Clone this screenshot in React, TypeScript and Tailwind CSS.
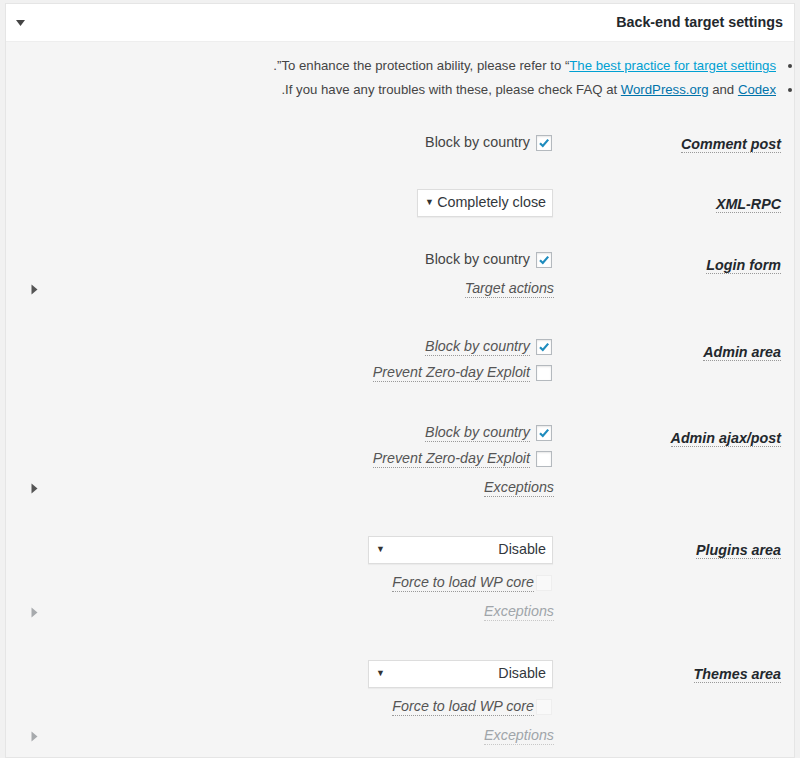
import React from 'react';

const font = { fontFamily: '"Liberation Sans", Arial, sans-serif' };

const Checkbox: React.FC<{ checked?: boolean; disabled?: boolean }> = ({ checked, disabled }) => (
  <span
    className={`inline-flex h-[16px] w-[16px] shrink-0 items-center justify-center border ${
      disabled ? 'border-[#eeeeee] bg-[#f9f9f9]' : 'border-[#b4b9be] bg-white shadow-[inset_0_1px_2px_rgba(0,0,0,0.1)]'
    }`}
  >
    {checked && (
      <svg width="12" height="12" viewBox="0 0 12 12">
        <path d="M2 6.2 L4.8 9 L10.2 2.6" fill="none" stroke="#1e8cbe" strokeWidth="2.2" />
      </svg>
    )}
  </span>
);

const Hint: React.FC<{ children: React.ReactNode; muted?: boolean }> = ({ children, muted }) => (
  <span
    className={`italic text-[14.3px] leading-[17px] border-b border-dotted ${
      muted ? 'text-[#a0a5aa] border-[#c8c8c8]' : 'text-[#555] border-[#999]'
    }`}
  >
    {children}
  </span>
);

const Toggle: React.FC<{ muted?: boolean }> = ({ muted }) => (
  <svg width="7" height="11" viewBox="0 0 7 11" className="shrink-0">
    <path d="M0.5 0.5 L6.5 5.5 L0.5 10.5 Z" fill={muted ? '#a7aaad' : '#555'} />
  </svg>
);

const Select: React.FC<{ value: string; width: string }> = ({ value, width }) => (
  <div
    className={`flex h-[28px] ${width} items-center justify-between border border-[#dddddd] bg-white pr-[6px] pl-[7px] text-[14.3px] text-[#32373c] shadow-[0_1px_1px_rgba(0,0,0,0.04)]`}
  >
    <span>{value}</span>
    <span className="text-[9px] text-[#333]">▼</span>
  </div>
);

const Label: React.FC<{ children: React.ReactNode; pt?: string }> = ({ children, pt = 'pt-[20px]' }) => (
  <div className={`w-[240px] shrink-0 pr-[13px] ${pt}`}>
    <span className="border-b border-dotted border-[#999] text-[14.3px] font-bold italic leading-[17px] text-[#23282d]">
      {children}
    </span>
  </div>
);

const CheckLine: React.FC<{ text: string; checked?: boolean; italic?: boolean; className?: string }> = ({
  text,
  checked,
  italic,
  className = '',
}) => (
  <div className={`flex h-[20px] items-center gap-[6px] pr-[2px] ${className}`}>
    <Checkbox checked={checked} />
    {italic ? <Hint>{text}</Hint> : <span className="text-[14.3px] text-[#444]">{text}</span>}
  </div>
);

const ForceLine: React.FC<{ className?: string }> = ({ className = '' }) => (
  <div className={`flex h-[20px] items-center gap-[2px] pr-[2px] ${className}`}>
    <Checkbox disabled />
    <Hint>Force to load WP core</Hint>
  </div>
);

const ToggleLine: React.FC<{ text: string; muted?: boolean; className?: string }> = ({ text, muted, className = '' }) => (
  <div className={`flex h-[20px] items-center justify-between ${className}`}>
    <Hint muted={muted}>{text}</Hint>
    <Toggle muted={muted} />
  </div>
);

const App: React.FC = () => {
  return (
    <div dir="rtl" style={font} className="h-[758px] overflow-hidden bg-[#f1f1f1] px-[5px] pt-[3px] text-[14px]">
      <div className="h-full border border-[#e5e5e5] bg-[#f5f5f5]">
        {/* header */}
        <div className="flex h-[38px] items-center justify-between border-b border-[#eeeeee] bg-white pr-[11px] pl-[10px]">
          <h2 className="text-[14.3px] font-bold text-[#23282d]">Back-end target settings</h2>
          <svg width="9" height="6" viewBox="0 0 9 6">
            <path d="M0 0 L9 0 L4.5 6 Z" fill="#444" />
          </svg>
        </div>

        {/* notes */}
        <ul className="mt-[12px] text-[13.2px] leading-[24px] text-[#444]">
          <li className="flex items-center gap-[12px] pr-[2px]">
            <span className="h-[4px] w-[4px] shrink-0 rounded-full bg-[#444]" />
            <span>
              To enhance the protection ability, please refer to “
              <a className="text-[#00a0d2] underline">The best practice for target settings</a>”.
            </span>
          </li>
          <li className="flex items-center gap-[12px] pr-[2px]">
            <span className="h-[4px] w-[4px] shrink-0 rounded-full bg-[#444]" />
            <span>
              If you have any troubles with these, please check FAQ at{' '}
              <a className="text-[#0073aa] underline">WordPress.org</a> and{' '}
              <a className="text-[#0073aa] underline">Codex</a>.
            </span>
          </li>
        </ul>

        {/* settings rows */}
        <div className="mt-[12px]">
          <div className="flex h-[60px]">
            <Label>Comment post</Label>
            <div className="flex flex-1 flex-col items-start pl-[25px] pt-[19px]">
              <CheckLine text="Block by country" checked />
            </div>
          </div>

          <div className="flex h-[60px]">
            <Label>XML-RPC</Label>
            <div className="flex flex-1 flex-col items-start pl-[25px] pt-[15px]">
              <div className="pr-[1px]">
                <Select value="Completely close" width="w-[136px]" />
              </div>
            </div>
          </div>

          <div className="flex h-[88px]">
            <Label pt="pt-[21px]">Login form</Label>
            <div className="flex flex-1 flex-col pl-[25px] pt-[16px]">
              <div className="flex">
                <CheckLine text="Block by country" checked />
              </div>
              <ToggleLine text="Target actions" className="mt-[9px]" />
            </div>
          </div>

          <div className="flex h-[86px]">
            <Label>Admin area</Label>
            <div className="flex flex-1 flex-col items-start pl-[25px] pt-[15px]">
              <CheckLine text="Block by country" checked italic />
              <CheckLine text="Prevent Zero-day Exploit" italic className="mt-[6px]" />
            </div>
          </div>

          <div className="flex h-[112px]">
            <Label>Admin ajax/post</Label>
            <div className="flex flex-1 flex-col pl-[25px] pt-[15px]">
              <div className="flex">
                <CheckLine text="Block by country" checked italic />
              </div>
              <div className="mt-[6px] flex">
                <CheckLine text="Prevent Zero-day Exploit" italic />
              </div>
              <ToggleLine text="Exceptions" className="mt-[9px]" />
            </div>
          </div>

          <div className="flex h-[124px]">
            <Label>Plugins area</Label>
            <div className="flex flex-1 flex-col pl-[25px] pt-[16px]">
              <div className="flex pr-[1px]">
                <Select value="Disable" width="w-[185px]" />
              </div>
              <div className="mt-[9px] flex">
                <ForceLine />
              </div>
              <ToggleLine text="Exceptions" muted className="mt-[9px]" />
            </div>
          </div>

          <div className="flex h-[124px]">
            <Label>Themes area</Label>
            <div className="flex flex-1 flex-col pl-[25px] pt-[16px]">
              <div className="flex pr-[1px]">
                <Select value="Disable" width="w-[185px]" />
              </div>
              <div className="mt-[9px] flex">
                <ForceLine />
              </div>
              <ToggleLine text="Exceptions" muted className="mt-[9px]" />
            </div>
          </div>
        </div>
      </div>
    </div>
  );
};

export default App;
